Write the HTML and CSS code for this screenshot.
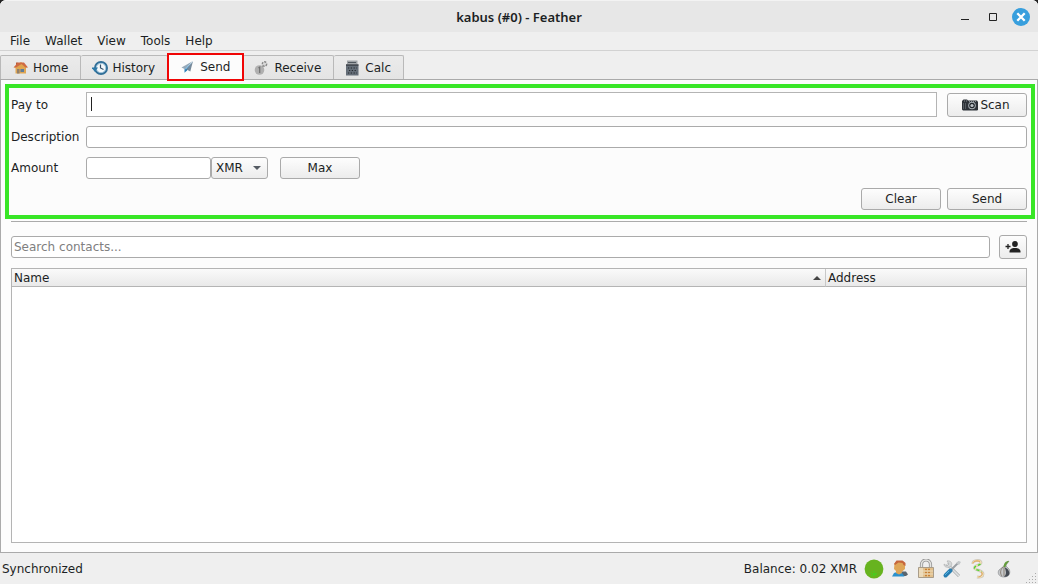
FILE: index.html
```html
<!DOCTYPE html>
<html lang="en">
<head>
<meta charset="utf-8">
<meta name="viewport" content="width=device-width, initial-scale=1">
<title>kabus (#0) - Feather</title>
<link rel="stylesheet" href="styles.css">
</head>
<body>
<div class="window">
  <header class="titlebar">
    <h1 class="title">kabus (#0) - Feather</h1>
    <div class="window-controls">
      <button class="wbtn" type="button" aria-label="Minimize"><svg width="18" height="18" viewBox="0 0 18 18"><path d="M5 11.500h8" stroke="#222" stroke-width="1"/></svg></button>
      <button class="wbtn" type="button" aria-label="Maximize"><svg width="18" height="18" viewBox="0 0 18 18"><path d="M5.500 5.500h7v7h-7z" fill="none" stroke="#222"/></svg></button>
      <button class="wbtn" type="button" aria-label="Close"><svg width="18" height="18" viewBox="0 0 18 18"><circle cx="9" cy="9" r="9" fill="#389fdd"/><path d="M5.300 5.300l7.400 7.400M12.700 5.300l-7.400 7.400" stroke="#fff" stroke-width="2.300"/></svg></button>
    </div>
  </header>

  <nav class="menubar">
    <button class="menu" type="button">File</button>
    <button class="menu" type="button">Wallet</button>
    <button class="menu" type="button">View</button>
    <button class="menu" type="button">Tools</button>
    <button class="menu" type="button">Help</button>
  </nav>

  <div class="tabs" role="tablist">
    <button class="tab" type="button" role="tab">
      <svg width="16" height="16" viewBox="0 0 16 16"><path d="M2.500 7h10.500v6.500H2.500z" fill="#dfa653"/><path d="M3 2.500h2V6H3z" fill="#b65c3a"/><path d="M8 2l6.500 5.500H1z" fill="#e0a44d"/><path d="M.5 7.500L5 2.500h6l4 5h-2.500L8.500 4 3 7.500z" fill="#cf6a43"/><path d="M4 9h2.500v4.500H4z" fill="#8f7f6c"/><path d="M7.500 9h3.500v3H7.500z" fill="#5f7c98"/></svg>
      Home</button>
    <button class="tab" type="button" role="tab">
      <svg width="16" height="16" viewBox="0 0 16 16"><circle cx="9" cy="8" r="6" fill="#f4f8fa" stroke="#316f98" stroke-width="2"/><circle cx="9" cy="8" r="4.700" fill="none" stroke="#8bb9d5" stroke-width=".8"/><path d="M8.500 4.500V8l3 1.500" fill="none" stroke="#35516a" stroke-width="1.200"/><path d="M-.5 7.500L3 12l3-4.500z" fill="#2d79a8"/></svg>
      History</button>
    <button class="tab selected" type="button" role="tab" aria-selected="true">
      <svg width="16" height="16" viewBox="0 0 16 16"><path d="M13 2L1.500 8.500l3 1.500z" fill="#96a9b9"/><path d="M13 2L4.500 10v3.800l2.500-2.300z" fill="#2b7fb8"/><path d="M13 2L6.500 10.500l3.800 2z" fill="#76899a"/><path d="M13 2L5.300 10.300" stroke="#e4edf4" stroke-width=".8"/></svg>
      Send</button>
    <button class="tab" type="button" role="tab">
      <svg width="16" height="16" viewBox="0 0 16 16"><circle cx="5.500" cy="10" r="4.800" fill="#b0b0b0"/><circle cx="10.500" cy="4" r="2.200" fill="#d8d8d8" stroke="#888" stroke-width="1.400" stroke-dasharray="2 1"/><path d="M4.500 8l1.200-.8V13" fill="none" stroke="#707070" stroke-width="1.200"/><path d="M8 7l2-1.500" stroke="#999"/></svg>
      Receive</button>
    <button class="tab" type="button" role="tab">
      <svg width="16" height="16" viewBox="0 0 16 16"><path d="M2 .5h10.500v4H2z" fill="#a0a4a8"/><path d="M1 4.500h12.500v11H1z" fill="#646d77"/><path d="M3 2.500h8" stroke="#50575e"/><path d="M1 5h12.500" stroke="#24292e"/><path d="M3 8h9M4 10.500h8M3 13h9" stroke="#23292f" stroke-width="1.200" stroke-dasharray="1.200 1.600"/></svg>
      Calc</button>
  </div>

  <main class="page">
    <form class="send-form">
      <div class="row">
        <label class="label" for="payto">Pay to</label>
        <input class="field payto" id="payto" type="text">
        <button class="btn scan" type="button">
          <svg width="16" height="14" viewBox="0 0 16 14"><path d="M0 3L1.500 1.500H5l1 1h9l1 1.500v8l-1 .5H1L0 11.500z" fill="#2d3238"/><path d="M2 3h3M7 3.500h7" stroke="#858b90" stroke-dasharray="1 1"/><circle cx="10" cy="7.500" r="3.800" fill="#a8afb5"/><circle cx="10" cy="7.500" r="2.800" fill="#20262b"/><circle cx="10" cy="7.500" r="1.600" fill="#bec4c9"/><path d="M1.500 5v6M3.500 5v6" stroke="#555b61"/></svg>
          Scan</button>
      </div>
      <div class="row">
        <label class="label" for="description">Description</label>
        <input class="field" id="description" type="text">
      </div>
      <div class="row">
        <label class="label" for="amount">Amount</label>
        <input class="field amount" id="amount" type="text">
        <div class="combo">
          <select class="currency" aria-label="Currency"><option>XMR</option></select>
          <svg class="caret" width="8" height="4" viewBox="0 0 8 4"><path d="M0 0h8L4 4z" fill="#555b63"/></svg>
        </div>
        <button class="btn max" type="button">Max</button>
      </div>
      <div class="row actions">
        <button class="btn" type="button">Clear</button>
        <button class="btn" type="button">Send</button>
      </div>
    </form>

    <section class="contacts">
      <div class="search-row">
        <input class="field" type="text" placeholder="Search contacts..." aria-label="Search contacts">
        <button class="btn add" type="button" aria-label="Add contact"><svg width="16" height="14" viewBox="0 0 16 14"><circle cx="10" cy="4" r="2.900" fill="#222"/><path d="M4.500 12.500v-1.500C5 8.500 8 8 10 8s5 .5 5.500 3v1.500z" fill="#222"/><path d="M.5 6.500h5M3 4v5" stroke="#222" stroke-width="1.300"/></svg></button>
      </div>
      <div class="tree">
        <table class="list">
          <thead><tr>
            <th class="col-name"><span class="head">Name<svg width="8" height="4" viewBox="0 0 8 4"><path d="M0 4h8L4 0z" fill="#444"/></svg></span></th>
            <th class="col-address">Address</th>
          </tr></thead>
          <tbody></tbody>
        </table>
      </div>
    </section>
  </main>

  <footer class="statusbar">
    <span class="sync">Synchronized</span>
    <span class="balance">Balance: 0.02 XMR</span>
    <div class="status-icons">
      <button class="icon" type="button" aria-label="Connection status"><svg width="20" height="20" viewBox="0 0 20 20"><circle cx="10" cy="10" r="9.400" fill="#67b31f"/><path d="M10 12v5M7 14l6 2M7 17l6-3" stroke="#38dc20" stroke-width="1" stroke-dasharray="1 1"/></svg></button>
      <button class="icon" type="button" aria-label="Account"><svg width="20" height="20" viewBox="0 0 20 20"><path d="M11 12.500h5l2 3-2 1.500h-5z" fill="#59656f"/><path d="M2 17.500l2-3.500 4-1.500 4 1.500 2.500 3.500z" fill="#2c91cd"/><path d="M6 11h5l1 3-3 1.500L6 14z" fill="#dfa456"/><path d="M4.500 4.500L6.500 2h6l2.500 2v6l-3.500 3H7L4 10z" fill="#dfa658"/><path d="M4 5L6.500 1.500h6L15.500 4v3l-2-1-1-2-4-.5L5 6z" fill="#c6663d"/></svg></button>
      <button class="icon" type="button" aria-label="Password"><svg width="20" height="20" viewBox="0 0 20 20"><path d="M5.500 9V5.500a4.500 4.500 0 0 1 9 0V9" fill="none" stroke="#929292" stroke-width="3.200"/><path d="M5.500 9V5.500a4.500 4.500 0 0 1 9 0V9" fill="none" stroke="#e5e5e2" stroke-width="1.600"/><path d="M2.500 8.500h15v10h-15z" fill="#e2c08c" stroke="#a99c89"/><path d="M3 9h4v9H3z" fill="#ecd9b6"/><path d="M9 10.500h5M9 13.500h5M9 16.500h5" stroke="#c98135" stroke-width="1.600" stroke-dasharray="2 1"/><path d="M3 12h14M3 15h14" stroke="#eee0c5" stroke-width=".8"/></svg></button>
      <button class="icon" type="button" aria-label="Settings"><svg width="20" height="20" viewBox="0 0 20 20"><path d="M5 5l12 12" stroke="#a4a8aa" stroke-width="3"/><path d="M5 5l12 12" stroke="#dfe1e2" stroke-width="1.700"/><path d="M2 5l3 2 2-2-2-3c4-1 6 3 4 5S2 9 2 5z" fill="#d5d8d9" stroke="#aaa" stroke-width=".6"/><path d="M17 3L8 12" stroke="#9a9fa3" stroke-width="2"/><path d="M14 4l3-2 2 1-2 3z" fill="#c4c8ca"/><path d="M8.500 11.500l-5 5" stroke="#287eb2" stroke-width="4" stroke-linecap="round"/><path d="M7 12l-4 4" stroke="#58b3df"/></svg></button>
      <button class="icon" type="button" aria-label="Seed"><svg width="20" height="20" viewBox="0 0 20 20"><path d="M5 4.500C4 1.500 12 0 13 3.500c0 3-7 2.500-6.500 5.500.5 2.500 8.500 2 8.500 6 0 3-3 3.500-6 3" fill="none" stroke="#cbc5ba" stroke-width="2.800"/><path d="M5 4.500C4 1.500 12 0 13 3.500c0 3-7 2.500-6.500 5.500.5 2.500 8.500 2 8.500 6 0 3-3 3.500-6 3" fill="none" stroke="#f0dfb4" stroke-width="1.400"/><path d="M12.500 5c-2 1.500-6 2-6 4 .5 2 5 2 7 3.500" fill="none" stroke="#4bd52c" stroke-width="1.400" stroke-dasharray="3 2"/><path d="M5 4.500c0-3 5-3 7-2M13.500 13c2 3-1 4.500-3 5" fill="none" stroke="#e3a04a"/></svg></button>
      <button class="icon" type="button" aria-label="Tor"><svg width="20" height="20" viewBox="0 0 20 20"><path d="M10 7c1-2 2-4 5-5-1 2-3 3-3 5l3 3c2 4 0 8-5 8s-7-4-5-7z" fill="#c6c8ca" stroke="#898b8f" stroke-width=".7"/><path d="M10.500 8l3 2c4 5 1 8-3.500 8 3-3 2-6 .5-10z" fill="#454b54"/><path d="M9 8c-3 3-3 7-1 9M10 8v9" fill="none" stroke="#8a8177"/><path d="M9.500 8c.5-4 2-6 5.500-6-1 2-3 3-3.500 6z" fill="#649c3c"/></svg></button>
    </div>
    <svg class="grip" width="12" height="12" viewBox="0 0 12 12"><path d="M9 1.500h2M6 4.500h6M3 7.500h9M0 10.500h12" stroke="#aaa" stroke-dasharray="1 2"/></svg>
  </footer>
</div>
</body>
</html>
```
FILE: styles.css
```css
* { box-sizing: border-box; }

body {
  margin: 0;
  background: #222;
  color: #1c1f24;
  font: 12px/16px "DejaVu Sans", sans-serif;
}

button, input, select { font: inherit; color: inherit; margin: 0; }
button { background: none; border: 0; padding: 0; }
svg { display: block; flex: none; }

.window {
  display: flex;
  flex-direction: column;
  min-height: 100vh;
  background: #efefef;
  border-radius: 6px 6px 0 0;
}

.titlebar {
  display: grid;
  grid-template-columns: 1fr auto 1fr;
  align-items: center;
  height: 32px;
  padding: 0 8px;
  background: #e7e7e7;
  border-top: 1px solid #f3f3f3;
  border-radius: 6px 6px 0 0;
}
.title { grid-column: 2; margin: 0; font: 600 13px/16px "Noto Sans", sans-serif; }
.window-controls { display: flex; justify-content: flex-end; gap: 10px; }

.menubar {
  display: flex;
  gap: 15px;
  height: 19px;
  padding: 0 10px;
  border-bottom: 1px solid #d2d2d2;
}

.tabs {
  display: flex;
  align-items: flex-end;
  height: 28px;
  position: relative;
}
.tab {
  display: flex;
  align-items: center;
  gap: 4px;
  height: 24px;
  padding: 0 12px 0 11px;
  background: linear-gradient(#ebebeb, #e4e4e4);
  border: 1px solid #b9b9b9;
  border-left-width: 0;
  border-bottom: 0;
  border-radius: 2px 2px 0 0;
}
.tab:first-child { padding-left: 12px; border-left-width: 1px; }
.tab.selected {
  height: 28px;
  margin: 0 -1px -2px -1px;
  z-index: 1;
  background: #fcfcfc;
  border: 2px solid #f00505;
  border-radius: 0;
}

.page {
  flex: 1;
  display: flex;
  flex-direction: column;
  padding: 4px 2px 9px 4px;
  background: #fcfcfc;
  border: 1px solid #aaa;
}

.send-form {
  display: flex;
  flex-direction: column;
  gap: 9px;
  padding: 4px 4px 5px 2px;
  border: 4px solid #38e626;
}
.row { display: flex; align-items: center; }
.label { flex: 0 0 75px; }
.field {
  flex: 1;
  min-width: 0;
  height: 22px;
  padding: 0 2px;
  background: #fff;
  border: 1px solid #aaa;
  border-radius: 3px;
  outline: 0;
}
.field::placeholder { color: #808080; opacity: 1; }
.payto {
  height: 25px;
  background: linear-gradient(#222, #222) 4px 4px / 1px 14px no-repeat #fff;
  border-radius: 0;
  border-color: #b4b4b4;
}
.amount { flex: 0 0 125px; }
.btn {
  display: flex;
  align-items: center;
  justify-content: center;
  gap: 2px;
  width: 80px;
  height: 22px;
  background: linear-gradient(#fdfdfd, #ececec);
  border: 1px solid #aaa;
  border-radius: 3px;
}
.scan { height: 24px; margin-left: 10px; padding-right: 2px; }
.max { margin-left: 12px; }
.combo { position: relative; }
.currency {
  display: block;
  appearance: none;
  width: 57px;
  height: 22px;
  padding: 0 4px;
  background: linear-gradient(#fdfdfd, #ececec);
  border: 1px solid #aaa;
  border-radius: 3px;
}
.caret { position: absolute; right: 7px; top: 9px; pointer-events: none; }
.actions { justify-content: flex-end; gap: 6px; }

.contacts {
  flex: 1;
  display: flex;
  flex-direction: column;
  gap: 9px;
  margin: 2px 8px 0 6px;
  padding-top: 13px;
  border-top: 1px solid #aaa;
}
.search-row { display: flex; align-items: center; gap: 9px; }
.add { width: 28px; height: 24px; }

.tree { flex: 1; background: #fff; border: 1px solid #b4b4b4; }
.list { width: 100%; border-collapse: separate; border-spacing: 0; table-layout: fixed; }
.list th {
  height: 18px;
  padding: 0 2px;
  background: linear-gradient(#fafafa, #e9e9e9);
  border-bottom: 1px solid #b4b4b4;
  font-weight: 400;
  text-align: left;
}
.list .col-name { padding-right: 4px; border-right: 1px solid #c8c8c8; }
.col-address { width: 200px; }
.head { display: flex; align-items: center; justify-content: space-between; }

.statusbar {
  display: flex;
  align-items: center;
  height: 31px;
  padding-left: 2px;
}
.balance { margin-left: auto; }
.status-icons { display: flex; gap: 6px; margin-left: 7px; }
.grip { align-self: flex-end; margin-left: 12px; }
```
